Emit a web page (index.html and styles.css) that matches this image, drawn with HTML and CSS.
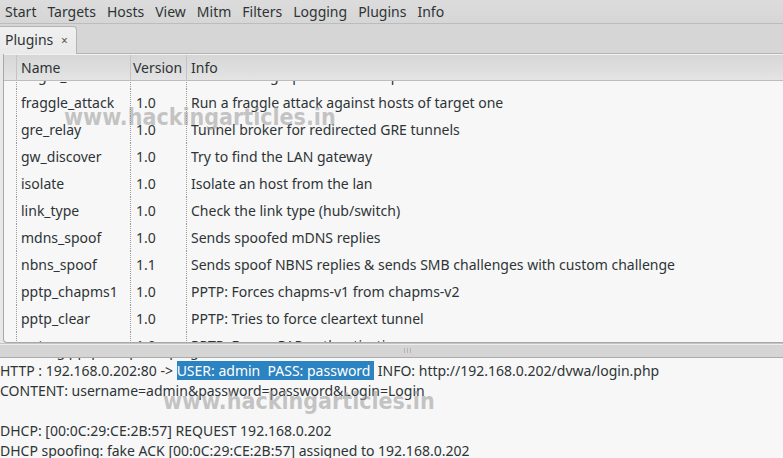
FILE: index.html
```html
<!DOCTYPE html>
<html>
<head>
<meta charset="utf-8">
<link rel="stylesheet" href="styles.css">
</head>
<body>
<div class="window">
  <div class="menubar">
    <span class="menu">Start</span>
    <span class="menu">Targets</span>
    <span class="menu">Hosts</span>
    <span class="menu">View</span>
    <span class="menu">Mitm</span>
    <span class="menu">Filters</span>
    <span class="menu">Logging</span>
    <span class="menu">Plugins</span>
    <span class="menu">Info</span>
  </div>
  <div class="tabbar">
    <div class="tab">Plugins <span class="close">×</span></div>
  </div>
  <div class="page">
    <div class="tree">
      <div class="thead">
        <div class="c0"></div>
        <div class="c1">Name</div>
        <div class="c2">Version</div>
        <div class="c3">Info</div>
      </div>
      <div class="viewport">
        <div class="rows">
          <div class="row"><div class="c0"></div><div class="c1">finger_submit</div><div class="c2">1.0</div><div class="c3">Submit a fingerprint to ettercap's website</div></div>
          <div class="row"><div class="c0"></div><div class="c1">fraggle_attack</div><div class="c2">1.0</div><div class="c3">Run a fraggle attack against hosts of target one</div></div>
          <div class="row"><div class="c0"></div><div class="c1">gre_relay</div><div class="c2">1.0</div><div class="c3">Tunnel broker for redirected GRE tunnels</div></div>
          <div class="row"><div class="c0"></div><div class="c1">gw_discover</div><div class="c2">1.0</div><div class="c3">Try to find the LAN gateway</div></div>
          <div class="row"><div class="c0"></div><div class="c1">isolate</div><div class="c2">1.0</div><div class="c3">Isolate an host from the lan</div></div>
          <div class="row"><div class="c0"></div><div class="c1">link_type</div><div class="c2">1.0</div><div class="c3">Check the link type (hub/switch)</div></div>
          <div class="row"><div class="c0"></div><div class="c1">mdns_spoof</div><div class="c2">1.0</div><div class="c3">Sends spoofed mDNS replies</div></div>
          <div class="row"><div class="c0"></div><div class="c1">nbns_spoof</div><div class="c2">1.1</div><div class="c3">Sends spoof NBNS replies &amp; sends SMB challenges with custom challenge</div></div>
          <div class="row"><div class="c0"></div><div class="c1">pptp_chapms1</div><div class="c2">1.0</div><div class="c3">PPTP: Forces chapms-v1 from chapms-v2</div></div>
          <div class="row"><div class="c0"></div><div class="c1">pptp_clear</div><div class="c2">1.0</div><div class="c3">PPTP: Tries to force cleartext tunnel</div></div>
          <div class="row"><div class="c0"></div><div class="c1">pptp_pap</div><div class="c2">1.0</div><div class="c3">PPTP: Forces PAP authentication</div></div>
        </div>
      </div>
    </div>
  </div>
  <div class="pane-sep"><span class="grip"></span></div>
  <div class="log">
    <div class="loglines">
      <div class="line">Activating pptp_chapms1 plugin...</div>
      <div class="line">HTTP : 192.168.0.202:80 -&gt; <span class="sel">USER: admin  PASS: password </span> INFO: http://192.168.0.202/dvwa/login.php</div>
      <div class="line">CONTENT: username=admin&amp;password=password&amp;Login=Login</div>
      <div class="line">&nbsp;</div>
      <div class="line">DHCP: [00:0C:29:CE:2B:57] REQUEST 192.168.0.202</div>
      <div class="line">DHCP spoofing: fake ACK [00:0C:29:CE:2B:57] assigned to 192.168.0.202</div>
    </div>
  </div>
  <div class="wm wm1">www.hackingarticles.in</div>
  <div class="wm wm2">www.hackingarticles.in</div>
</div>
</body>
</html>
```
FILE: styles.css
```css
html, body {
  margin: 0;
  padding: 0;
}
body {
  width: 783px;
  height: 458px;
  overflow: hidden;
  background: #f7f7f7;
  font-family: "Noto Sans", "DejaVu Sans", sans-serif;
  font-size: 14px;
  color: #2e3436;
}
.window {
  position: relative;
  width: 783px;
  height: 458px;
  display: flex;
  flex-direction: column;
}
.menubar {
  height: 24px;
  flex: none;
  display: flex;
  align-items: center;
  background: linear-gradient(#dcdcdc, #d6d6d6);
  border-bottom: 1px solid #bcbcbc;
  box-sizing: border-box;
}
.menu {
  padding: 0 5.5px;
  line-height: 20px;
}
.menu:first-child {
  padding-left: 5px;
}
.tabbar {
  height: 30px;
  flex: none;
  background: #d6d6d6;
  border-bottom: 1px solid #b4b4b4;
  box-sizing: border-box;
  display: flex;
  align-items: flex-end;
}
.tab {
  width: 77px;
  height: 28px;
  box-sizing: border-box;
  background: linear-gradient(#f0f0f0, #e9e9e9);
  border: 1px solid #b4b4b4;
  border-left: none;
  border-bottom: none;
  border-radius: 0 4px 0 0;
  margin-bottom: -1px;
  padding-left: 5px;
  line-height: 25px;
}
.close {
  font-size: 12px;
  margin-left: 4px;
  color: #555;
}
.page {
  height: 289px;
  flex: none;
  background: #e8e8e8;
  padding: 0 0 0 3px;
  box-sizing: border-box;
}
.tree {
  height: 289px;
  box-sizing: border-box;
  border-left: 1px solid #a8a8a8;
  border-bottom: 1px solid #a8a8a8;
  border-radius: 0 0 0 4px;
  background: #f7f7f7;
  display: flex;
  flex-direction: column;
  overflow: hidden;
}
.thead {
  height: 27px;
  flex: none;
  display: flex;
  background: linear-gradient(#d6d6d6, #e4e4e4);
  border-top: 1px solid #f2f2f2;
  border-bottom: 1px solid #bdbdbd;
  box-sizing: border-box;
  line-height: 25px;
}
.thead > div {
  border-right: 1px solid #c4c4c4;
  box-sizing: border-box;
}
.thead .c3 {
  border-right: none;
}
.c0 { width: 13px; flex: none; }
.c1 { width: 114px; flex: none; padding-left: 4px; box-sizing: border-box; }
.c2 { width: 56px; flex: none; padding-left: 5px; box-sizing: border-box; }
.c3 { flex: 1; padding-left: 4px; white-space: nowrap; }
.thead .c2 { padding-left: 2px; }
.viewport {
  flex: 1;
  overflow: hidden;
}
.rows {
  margin-top: -19px;
}
.row {
  height: 27px;
  display: flex;
  line-height: 27px;
}
.row > div {
  box-sizing: border-box;
}
.row .c0, .row .c1, .row .c2 {
  border-right: 1px dotted #9a9a9a;
}
.pane-sep {
  height: 15px;
  flex: none;
  background: #d5d5d5;
  border-top: 1px solid #c4c4c4;
  border-bottom: 1px solid #acacac;
  box-shadow: inset 0 1px 0 #ededed;
  box-sizing: border-box;
  display: flex;
  justify-content: center;
  align-items: center;
}
.grip {
  width: 7px;
  height: 5px;
  border-left: 1px solid #b4b4b4;
  border-right: 1px solid #b4b4b4;
  box-sizing: border-box;
  position: relative;
  left: 16px;
  background: linear-gradient(90deg, transparent 2px, #b4b4b4 2px, #b4b4b4 3px, transparent 3px);
}
.log {
  flex: 1;
  overflow: hidden;
  background: #f7f7f7;
}
.loglines {
  margin-top: -17px;
}
.line {
  height: 20px;
  line-height: 20px;
  white-space: pre;
}
.sel {
  background: #2b83c1;
  color: #ffffff;
}
.wm {
  position: absolute;
  font-family: "DejaVu Sans Condensed", "DejaVu Sans", sans-serif;
  font-stretch: condensed;
  font-weight: bold;
  font-size: 23px;
  color: rgba(160, 160, 160, 0.6);
  white-space: nowrap;
  pointer-events: none;
}
.wm1 { left: 64px; top: 104px; }
.wm2 { left: 163px; top: 388px; }
```
